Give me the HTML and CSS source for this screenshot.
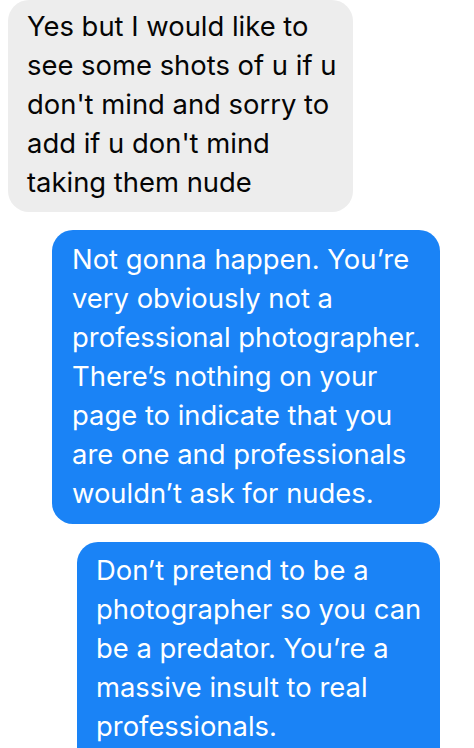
FILE: index.html
```html
<!DOCTYPE html>
<html lang="en">
<head>
    <meta charset="UTF-8">
    <meta name="viewport" content="width=device-width, initial-scale=1.0">
    <title>Messages</title>
    <link rel="stylesheet" href="styles.css">
</head>
<body>
    <div class="thread">
        <div class="bubble received">
            Yes but I would like to<br>
            see some shots of u if u<br>
            don't mind and sorry to<br>
            add if u don't mind<br>
            taking them nude
        </div>
        <div class="bubble sent first">
            Not gonna happen. You’re<br>
            very obviously not a<br>
            professional photographer.<br>
            There’s nothing on your<br>
            page to indicate that you<br>
            are one and professionals<br>
            wouldn’t ask for nudes.
        </div>
        <div class="bubble sent second">
            Don’t pretend to be a<br>
            photographer so you can<br>
            be a predator. You’re a<br>
            massive insult to real<br>
            professionals.
        </div>
    </div>
</body>
</html>
```

FILE: styles.css
```css
body {
    margin: 0;
    background: #fff;
    font-family: Inter, "Liberation Sans", sans-serif;
    overflow: hidden;
}
.thread {
    display: flex;
    flex-direction: column;
    gap: 18px;
    padding: 0 34px 0 8px;
}
.bubble {
    box-sizing: border-box;
    font-size: 27.4px;
    line-height: 39px;
    border-radius: 21px;
    white-space: nowrap;
}
.received {
    align-self: flex-start;
    width: 345px;
    background: #ededed;
    color: #050505;
    padding: 7px 10px 10px 19px;
}
.sent {
    align-self: flex-end;
    background: #1a83f6;
    color: #fff;
}
.sent.first {
    width: 388px;
    padding: 10px 10px 11px 20px;
}
.sent.second {
    width: 363px;
    padding: 9px 10px 30px 19px;
}
```
